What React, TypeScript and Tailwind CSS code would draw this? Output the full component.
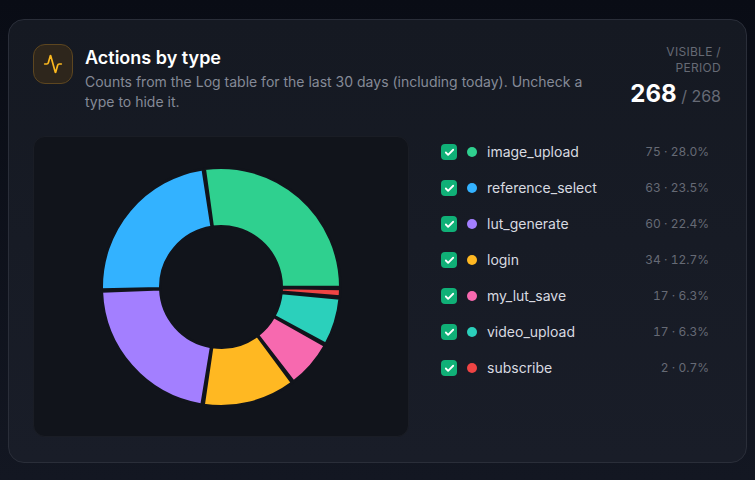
import React from "react";
import { Activity, Check } from "lucide-react";

const items = [
  { name: "image_upload", n: 75, pct: "28.0%", color: "#2fd08f", dot: "bg-[#2fd08f]" },
  { name: "reference_select", n: 63, pct: "23.5%", color: "#33b2ff", dot: "bg-[#33b2ff]" },
  { name: "lut_generate", n: 60, pct: "22.4%", color: "#a37fff", dot: "bg-[#a37fff]" },
  { name: "login", n: 34, pct: "12.7%", color: "#ffb822", dot: "bg-[#ffb822]" },
  { name: "my_lut_save", n: 17, pct: "6.3%", color: "#f769af", dot: "bg-[#f769af]" },
  { name: "video_upload", n: 17, pct: "6.3%", color: "#2bd0bb", dot: "bg-[#2bd0bb]" },
  { name: "subscribe", n: 2, pct: "0.7%", color: "#ef4444", dot: "bg-[#ef4444]" },
];

function sector(cx: number, cy: number, ro: number, ri: number, a0: number, a1: number) {
  const p = (r: number, a: number) => {
    const t = (a * Math.PI) / 180;
    return `${(cx + r * Math.cos(t)).toFixed(3)} ${(cy - r * Math.sin(t)).toFixed(3)}`;
  };
  const large = a1 - a0 > 180 ? 1 : 0;
  return `M${p(ro, a0)} A${ro} ${ro} 0 ${large} 0 ${p(ro, a1)} L${p(ri, a1)} A${ri} ${ri} 0 ${large} 1 ${p(ri, a0)} Z`;
}

function Donut() {
  const total = 268;
  const padding = 1;
  const minAngle = 1;
  const real = 360 - items.length * padding - items.length * minAngle;
  let a = 0;
  return (
    <svg width="374" height="299" viewBox="0 0 374 299" className="block">
      {items.map((it) => {
        const a0 = a;
        const a1 = a0 + minAngle + (it.n / total) * real;
        a = a1 + padding;
        return (
          <path
            key={it.name}
            d={sector(187, 150, 119.25, 60.75, a0, a1)}
            fill={it.color}
            stroke="#11141b"
            strokeWidth="2.5"
          />
        );
      })}
    </svg>
  );
}

export default function App() {
  return (
    <div className="min-h-[480px] w-full bg-gradient-to-b from-[#090c15] to-[#131722] px-2 pt-[19px] font-['Inter',sans-serif]">
      <div className="h-[444px] rounded-2xl border border-[#2a2e39] bg-gradient-to-b from-[#151922] to-[#191d28] px-6 pt-6">
        <div className="flex items-start justify-between gap-6">
          <div className="flex items-start gap-3">
            <div className="flex h-10 w-10 shrink-0 items-center justify-center rounded-xl border border-[#5d4620] bg-[#2e261c] text-[#fbb81f]">
              <Activity size={20} />
            </div>
            <div className="w-[500px]">
              <h2 className="text-lg leading-7 font-semibold text-white">Actions by type</h2>
              <p className="text-sm leading-5 text-[#858a97]">
                Counts from the Log table for the last 30 days (including today). Uncheck a type to hide it.
              </p>
            </div>
          </div>
          <div className="mr-px w-[100px] shrink-0 text-right">
            <div className="text-xs leading-4 tracking-[0.3px] text-[#666a75] uppercase">Visible / period</div>
            <div className="mt-0.5 leading-8 whitespace-nowrap">
              <span className="text-2xl font-bold text-white">268</span>
              <span className="text-base text-[#666a75]"> / 268</span>
            </div>
          </div>
        </div>
        <div className="mt-6 flex gap-8">
          <div className="h-[301px] w-[376px] shrink-0 rounded-xl border border-[#1a1d25] bg-[#11141b]">
            <Donut />
          </div>
          <ul className="flex flex-1 flex-col gap-1 pr-[13px]">
            {items.map((it) => (
              <li key={it.name} className="flex h-8 items-center">
                <span className="flex h-4 w-4 items-center justify-center rounded bg-[#10b077] text-white">
                  <Check size={11} strokeWidth={4} />
                </span>
                <span className={`ml-2.5 h-2.5 w-2.5 rounded-full ${it.dot}`} />
                <span className="ml-2.5 flex-1 text-sm text-[#d8dae0]">{it.name}</span>
                <span className="text-xs tabular-nums text-[#666a75]">
                  {it.n} · {it.pct}
                </span>
              </li>
            ))}
          </ul>
        </div>
      </div>
    </div>
  );
}
